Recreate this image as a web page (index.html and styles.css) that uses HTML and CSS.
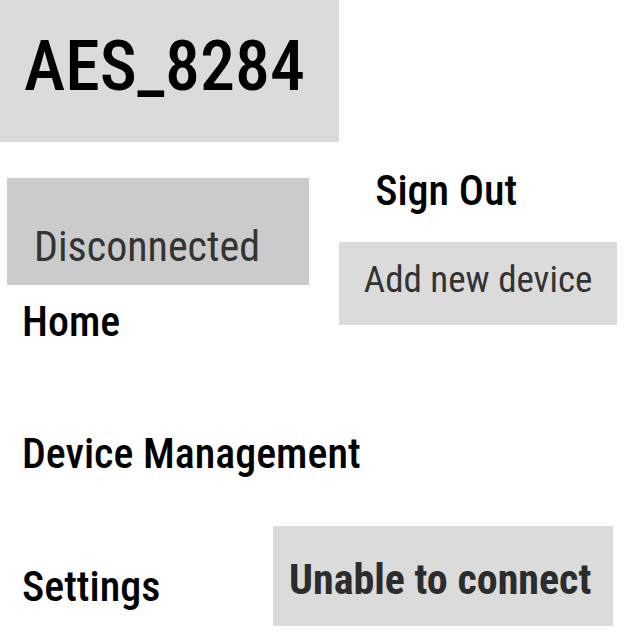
FILE: index.html
```html
<!DOCTYPE html>
<html lang="en">
<head>
<meta charset="utf-8">
<meta name="viewport" content="width=device-width, initial-scale=1">
<title>AES_8284</title>
<link rel="stylesheet" href="styles.css">
</head>
<body>
<main class="screen">
  <div class="top">
    <div class="device">
      <header class="banner"><h1 class="title">AES_8284</h1></header>
      <p class="status">Disconnected</p>
      <a class="link" href="#">Home</a>
    </div>
    <div class="account">
      <a class="link sign-out" href="#">Sign Out</a>
      <button class="add" type="button">Add new device</button>
    </div>
  </div>
  <a class="link management" href="#">Device Management</a>
  <div class="bottom">
    <a class="link settings" href="#">Settings</a>
    <p class="notice" role="status">Unable to connect</p>
  </div>
</main>
</body>
</html>
```
FILE: styles.css
```css
* {
  box-sizing: border-box;
}

body {
  margin: 0;
  background: #fefefe;
  color: #000;
  font-family: "Roboto Condensed", Roboto, sans-serif;
  font-size: 42px;
  line-height: 48px;
  white-space: nowrap;
}

.top {
  display: grid;
  grid-template-columns: 53% 1fr;
}

.banner {
  padding: 26px 24px 36px;
  background: #dbdbdb;
}

.title {
  margin: 0;
  font-size: 70px;
  line-height: 80px;
  font-weight: 500;
}

.status {
  margin: 36px 30px 13px 7px;
  padding: 45px 27px 14px;
  background: #cbcbcb;
  color: #333;
}

.link {
  display: block;
  padding-left: 22px;
  color: inherit;
  font-weight: 500;
  text-decoration: none;
}

.account {
  padding: 167px 23px 0 0;
}

.sign-out {
  padding-left: 36px;
}

.add {
  display: block;
  width: 100%;
  margin: 27px 0 0;
  padding: 14px 24px 21px;
  border: 0;
  background: #dbdbdb;
  color: #333;
  font: inherit;
  font-size: 37px;
  line-height: 48px;
  text-align: center;
}

.management {
  margin: 84px 0 48px;
}

.bottom {
  display: grid;
  grid-template-columns: 273px 1fr;
  padding-right: 27px;
}

.settings {
  padding-top: 37px;
}

.notice {
  margin: 0;
  padding: 30px 16px 22px;
  background: #dbdbdb;
  color: #2c2c2c;
  font-weight: 700;
}
```
